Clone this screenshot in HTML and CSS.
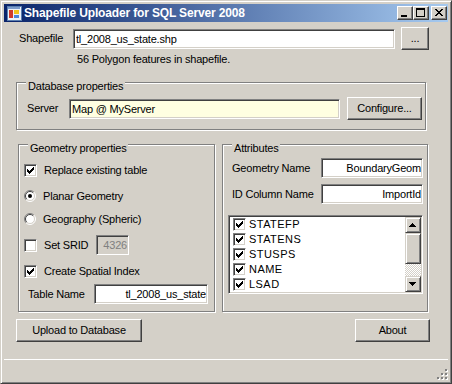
FILE: index.html
```html
<!DOCTYPE html>
<html>
<head>
  <title>Shapefile Uploader for SQL Server 2008</title>
  <link rel="stylesheet" href="styles.css">
</head>
<body>
  <div class="window">
    <div class="titlebar">
      <svg class="app-icon" width="16" height="16" viewBox="0 0 16 16" shape-rendering="crispEdges">
        <rect x="1" y="1" width="14" height="14" fill="#eef2f8" stroke="#5b7fb0"/>
        <rect x="2" y="2" width="12" height="2" fill="#7d9ccc"/>
        <rect x="3" y="5" width="4" height="8" fill="#d03a2c"/>
        <rect x="8" y="5" width="5" height="4" fill="#f2c21b"/>
        <rect x="8" y="10" width="5" height="3" fill="#4f86d8"/>
      </svg>
      <span class="title">Shapefile Uploader for SQL Server 2008</span>
      <div class="caption-buttons">
        <span class="cap-btn">
          <svg width="14" height="12" viewBox="0 0 14 12" shape-rendering="crispEdges"><path d="M3 8h6v2h-6z"/></svg>
        </span>
        <span class="cap-btn">
          <svg width="14" height="12" viewBox="0 0 14 12" shape-rendering="crispEdges"><path d="M2 1h9v2h-9z M2 3h1v6h-1z M10 3h1v6h-1z M2 9h9v1h-9z"/></svg>
        </span>
        <span class="cap-btn close">
          <svg width="14" height="12" viewBox="0 0 14 12" shape-rendering="crispEdges"><path d="M3 2h2v1h-2z M9 2h2v1h-2z M4 3h2v1h-2z M8 3h2v1h-2z M5 4h4v1h-4z M6 5h2v1h-2z M5 6h4v1h-4z M4 7h2v1h-2z M8 7h2v1h-2z M3 8h2v1h-2z M9 8h2v1h-2z"/></svg>
        </span>
      </div>
    </div>

    <div class="client">
      <div class="content">
        <div class="file-row">
          <span class="file-label">Shapefile</span>
          <input class="textbox file-box" value="tl_2008_us_state.shp">
          <button class="btn browse-btn">...</button>
        </div>
        <div class="file-info">56 Polygon features in shapefile.</div>

        <div class="group db-group">
          <span class="group-title">Database properties</span>
          <div class="server-row">
            <span class="server-label">Server</span>
            <input class="textbox server-box" value="Map @ MyServer">
            <button class="btn configure-btn">Configure...</button>
          </div>
        </div>

        <div class="columns">
          <div class="group geom-group">
            <span class="group-title">Geometry properties</span>
            <div class="opt first">
              <span class="check on"><svg width="11" height="11" viewBox="0 0 11 11" shape-rendering="crispEdges"><path d="M8 2h1v1h-1z M7 3h2v1h-2z M2 4h1v1h-1z M6 4h3v1h-3z M2 5h2v1h-2z M5 5h3v1h-3z M2 6h5v1h-5z M3 7h3v1h-3z M4 8h1v1h-1z"/></svg></span>
              <span>Replace existing table</span>
            </div>
            <div class="opt">
              <svg class="radio" width="12" height="12" viewBox="0 0 12 12">
                <circle cx="6" cy="6" r="5" fill="#fff"/>
                <path d="M9.9 2.1A5.5 5.5 0 0 0 2.1 9.9" fill="none" stroke="#808080"/>
                <path d="M9.2 2.8A4.5 4.5 0 0 0 2.8 9.2" fill="none" stroke="#404040"/>
                <path d="M2.1 9.9A5.5 5.5 0 0 0 9.9 2.1" fill="none" stroke="#fff"/>
                <path d="M2.8 9.2A4.5 4.5 0 0 0 9.2 2.8" fill="none" stroke="#d4d0c8"/>
                <circle cx="6" cy="6" r="2"/>
              </svg>
              <span>Planar Geometry</span>
            </div>
            <div class="opt tight">
              <svg class="radio" width="12" height="12" viewBox="0 0 12 12">
                <circle cx="6" cy="6" r="5" fill="#fff"/>
                <path d="M9.9 2.1A5.5 5.5 0 0 0 2.1 9.9" fill="none" stroke="#808080"/>
                <path d="M9.2 2.8A4.5 4.5 0 0 0 2.8 9.2" fill="none" stroke="#404040"/>
                <path d="M2.1 9.9A5.5 5.5 0 0 0 9.9 2.1" fill="none" stroke="#fff"/>
                <path d="M2.8 9.2A4.5 4.5 0 0 0 9.2 2.8" fill="none" stroke="#d4d0c8"/>
              </svg>
              <span>Geography (Spheric)</span>
            </div>
            <div class="opt">
              <span class="check"></span>
              <span class="srid-text">Set SRID</span>
              <input class="textbox srid-box" value="4326">
            </div>
            <div class="opt">
              <span class="check on"><svg width="11" height="11" viewBox="0 0 11 11" shape-rendering="crispEdges"><path d="M8 2h1v1h-1z M7 3h2v1h-2z M2 4h1v1h-1z M6 4h3v1h-3z M2 5h2v1h-2z M5 5h3v1h-3z M2 6h5v1h-5z M3 7h3v1h-3z M4 8h1v1h-1z"/></svg></span>
              <span>Create Spatial Index</span>
            </div>
            <div class="opt tight">
              <span class="table-label">Table Name</span>
              <input class="textbox table-box" value="tl_2008_us_state">
            </div>
          </div>

          <div class="group attr-group">
            <span class="group-title">Attributes</span>
            <div class="attr-row first">
              <span class="attr-label">Geometry Name</span>
              <input class="textbox attr-box" value="BoundaryGeom">
            </div>
            <div class="attr-row">
              <span class="attr-label">ID Column Name</span>
              <input class="textbox attr-box" value="ImportId">
            </div>
            <div class="listbox">
              <div class="list-items">
                <div class="item"><span class="check on"><svg width="11" height="11" viewBox="0 0 11 11" shape-rendering="crispEdges"><path d="M8 2h1v1h-1z M7 3h2v1h-2z M2 4h1v1h-1z M6 4h3v1h-3z M2 5h2v1h-2z M5 5h3v1h-3z M2 6h5v1h-5z M3 7h3v1h-3z M4 8h1v1h-1z"/></svg></span>STATEFP</div>
                <div class="item"><span class="check on"><svg width="11" height="11" viewBox="0 0 11 11" shape-rendering="crispEdges"><path d="M8 2h1v1h-1z M7 3h2v1h-2z M2 4h1v1h-1z M6 4h3v1h-3z M2 5h2v1h-2z M5 5h3v1h-3z M2 6h5v1h-5z M3 7h3v1h-3z M4 8h1v1h-1z"/></svg></span>STATENS</div>
                <div class="item"><span class="check on"><svg width="11" height="11" viewBox="0 0 11 11" shape-rendering="crispEdges"><path d="M8 2h1v1h-1z M7 3h2v1h-2z M2 4h1v1h-1z M6 4h3v1h-3z M2 5h2v1h-2z M5 5h3v1h-3z M2 6h5v1h-5z M3 7h3v1h-3z M4 8h1v1h-1z"/></svg></span>STUSPS</div>
                <div class="item"><span class="check on"><svg width="11" height="11" viewBox="0 0 11 11" shape-rendering="crispEdges"><path d="M8 2h1v1h-1z M7 3h2v1h-2z M2 4h1v1h-1z M6 4h3v1h-3z M2 5h2v1h-2z M5 5h3v1h-3z M2 6h5v1h-5z M3 7h3v1h-3z M4 8h1v1h-1z"/></svg></span>NAME</div>
                <div class="item"><span class="check on"><svg width="11" height="11" viewBox="0 0 11 11" shape-rendering="crispEdges"><path d="M8 2h1v1h-1z M7 3h2v1h-2z M2 4h1v1h-1z M6 4h3v1h-3z M2 5h2v1h-2z M5 5h3v1h-3z M2 6h5v1h-5z M3 7h3v1h-3z M4 8h1v1h-1z"/></svg></span>LSAD</div>
              </div>
              <div class="scrollbar">
                <span class="sb-btn"><svg width="14" height="14" viewBox="0 0 14 14" shape-rendering="crispEdges"><path d="M6 5h1v1h-1z M5 6h3v1h-3z M4 7h5v1h-5z M3 8h7v1h-7z"/></svg></span>
                <span class="sb-thumb"></span>
                <span class="sb-track"></span>
                <span class="sb-btn"><svg width="14" height="14" viewBox="0 0 14 14" shape-rendering="crispEdges"><path d="M3 5h7v1h-7z M4 6h5v1h-5z M5 7h3v1h-3z M6 8h1v1h-1z"/></svg></span>
              </div>
            </div>
          </div>
        </div>

        <div class="buttons">
          <button class="btn upload-btn">Upload to Database</button>
          <button class="btn about-btn">About</button>
        </div>
      </div>

      <div class="statusbar">
        <svg class="grip" width="12" height="12" viewBox="0 0 12 12" shape-rendering="crispEdges">
          <path fill="#fff" d="M10 2h2v2h-2z M6 6h2v2h-2z M10 6h2v2h-2z M2 10h2v2h-2z M6 10h2v2h-2z M10 10h2v2h-2z"/>
          <path fill="#808080" d="M9 1h2v2h-2z M5 5h2v2h-2z M9 5h2v2h-2z M1 9h2v2h-2z M5 9h2v2h-2z M9 9h2v2h-2z"/>
        </svg>
      </div>
    </div>
  </div>
</body>
</html>
```

FILE: styles.css
```css
/* Classic Windows form look */
body {
  margin: 0;
  font-family: "Liberation Sans", Arial, sans-serif;
  font-size: 11px;
  line-height: 13px;
  letter-spacing: -0.2px;
  color: #000;
  background: #d4d0c8;
}

.window {
  width: 452px;
  height: 384px;
  box-sizing: border-box;
  border: 1px solid;
  border-color: #d4d0c8 #404040 #404040 #d4d0c8;
  box-shadow: inset 1px 1px #fff, inset -1px -1px #808080;
  padding: 3px;
  background: #d4d0c8;
  display: flex;
  flex-direction: column;
}

/* Title bar */
.titlebar {
  height: 18px;
  flex: none;
  display: flex;
  align-items: center;
  padding: 0 1px 0 2px;
  background: linear-gradient(to right, #0a246a, #a6caf0);
  color: #fff;
}

.app-icon {
  flex: none;
}

.title {
  flex: 1;
  margin-left: 2px;
  font-weight: bold;
  font-size: 12px;
  letter-spacing: -0.15px;
  white-space: nowrap;
}

.caption-buttons {
  display: flex;
}

.cap-btn {
  width: 16px;
  height: 14px;
  box-sizing: border-box;
  border: 1px solid;
  border-color: #fff #404040 #404040 #fff;
  box-shadow: inset -1px -1px #808080;
  background: #d4d0c8;
  display: flex;
}

.cap-btn.close {
  margin-left: 2px;
}

/* Client area */
.client {
  flex: 1;
  display: flex;
  flex-direction: column;
}

.content {
  padding: 5px 0 0 12px;
}

.textbox {
  box-sizing: border-box;
  height: 20px;
  margin: 0;
  padding: 0 1px 0 2px;
  border: 1px solid;
  border-color: #808080 #fff #fff #808080;
  box-shadow: inset 1px 1px #404040, inset -1px -1px #d4d0c8;
  background: #fff;
  color: #000;
  font: inherit;
  letter-spacing: inherit;
  outline: none;
}

.btn {
  box-sizing: border-box;
  height: 23px;
  margin: 0;
  padding: 0;
  border: 1px solid;
  border-color: #fff #404040 #404040 #fff;
  box-shadow: inset -1px -1px #808080;
  background: #d4d0c8;
  color: #000;
  font: inherit;
  letter-spacing: inherit;
}

.file-row {
  display: flex;
  align-items: center;
  height: 23px;
}

.file-label {
  width: 54px;
  margin-left: 3px;
}

.file-box {
  width: 322px;
}

.browse-btn {
  width: 28px;
  margin-left: 6px;
}

.file-info {
  margin: 3px 0 0 61px;
}

/* Group boxes */
.group {
  box-sizing: border-box;
  border: 1px solid #808080;
  box-shadow: inset 1px 1px #fff, 1px 1px #fff;
  display: flex;
  flex-direction: column;
}

.group-title {
  align-self: flex-start;
  margin: -3px 0 0 9px;
  padding: 0 2px;
  background: #d4d0c8;
}

.db-group {
  width: 410px;
  height: 48px;
  margin-top: 16px;
}

.server-row {
  display: flex;
  align-items: center;
  height: 23px;
  margin-top: 4px;
  padding-left: 10px;
}

.server-label {
  width: 42px;
}

.server-box {
  width: 271px;
  background: #ffffe1;
}

.configure-btn {
  width: 75px;
  margin-left: 7px;
}

.columns {
  display: flex;
  margin: 14px 0 0 2px;
}

.geom-group {
  width: 197px;
  height: 168px;
}

.attr-group {
  width: 206px;
  height: 168px;
  margin-left: 7px;
}

.opt {
  display: flex;
  align-items: center;
  height: 20px;
  margin-top: 6px;
  padding-left: 5px;
}

.opt.first {
  margin-top: 5px;
}

.opt.tight {
  margin-top: 3px;
}

.check {
  flex: none;
  width: 13px;
  height: 13px;
  box-sizing: border-box;
  border: 1px solid;
  border-color: #808080 #fff #fff #808080;
  box-shadow: inset 1px 1px #404040, inset -1px -1px #d4d0c8;
  background: #fff;
  display: flex;
}

.opt .check {
  margin-right: 7px;
}

.radio {
  flex: none;
  margin-right: 7px;
}

.srid-text {
  width: 52px;
}

.srid-box {
  width: 33px;
  background: #d4d0c8;
  color: #808080;
  text-align: right;
}

.table-label {
  width: 66px;
  margin-left: 4px;
}

.table-box {
  width: 114px;
  text-align: right;
}

/* Attributes */
.attr-row {
  display: flex;
  align-items: center;
  height: 20px;
  margin-top: 6px;
  padding-left: 9px;
}

.attr-row.first {
  margin-top: 3px;
}

.attr-label {
  width: 89px;
}

.attr-box {
  width: 102px;
  text-align: right;
}

.listbox {
  width: 195px;
  height: 79px;
  box-sizing: border-box;
  margin: 11px 0 0 5px;
  padding: 1px;
  border: 1px solid;
  border-color: #808080 #fff #fff #808080;
  box-shadow: inset 1px 1px #404040, inset -1px -1px #d4d0c8;
  background: #fff;
  display: flex;
}

.list-items {
  flex: 1;
}

.item {
  display: flex;
  align-items: center;
  height: 15px;
  padding-left: 3px;
  letter-spacing: 0.45px;
}

.item .check {
  margin-right: 3px;
}

.scrollbar {
  width: 16px;
  display: flex;
  flex-direction: column;
}

.sb-btn,
.sb-thumb {
  box-sizing: border-box;
  border: 1px solid;
  border-color: #d4d0c8 #404040 #404040 #d4d0c8;
  box-shadow: inset 1px 1px #fff, inset -1px -1px #808080;
  background: #d4d0c8;
}

.sb-btn {
  height: 16px;
  display: flex;
}

.sb-thumb {
  height: 31px;
}

.sb-track {
  flex: 1;
  background: repeating-conic-gradient(#fff 0 25%, #d4d0c8 0 50%) 0 0 / 2px 2px;
}

/* Bottom buttons and status strip */
.buttons {
  display: flex;
  justify-content: space-between;
  width: 414px;
  margin-top: 7px;
}

.upload-btn {
  width: 126px;
}

.about-btn {
  width: 75px;
}

.statusbar {
  margin-top: auto;
  height: 21px;
  box-sizing: border-box;
  border-top: 1px solid #fff;
  display: flex;
  justify-content: flex-end;
  align-items: flex-end;
}
```
